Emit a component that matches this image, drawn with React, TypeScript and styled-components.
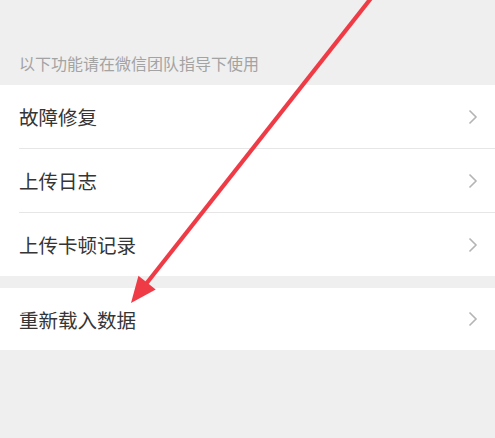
import React from "react";
import styled, { createGlobalStyle } from "styled-components";

const GlobalStyle = createGlobalStyle`
  html, body {
    margin: 0;
    padding: 0;
    background: #efefef;
  }
  body {
    font-family: "Noto Sans CJK SC", "Noto Sans", sans-serif;
  }
`;

const Page = styled.div`
  position: relative;
  width: 495px;
  height: 438px;
  background: #efefef;
  overflow: hidden;
`;

const Hint = styled.div`
  height: 85px;
  box-sizing: border-box;
  display: flex;
  align-items: flex-end;
  padding: 0 0 13px 19px;
  font-size: 16px;
  line-height: 18px;
  color: #a3a3a3;
`;

const Group = styled.div<{ gapTop?: boolean }>`
  background: #ffffff;
  margin-top: ${(p) => (p.gapTop ? "12px" : "0")};
`;

const Row = styled.div<{ h?: number }>`
  position: relative;
  height: ${(p) => p.h ?? 63}px;
  display: flex;
  align-items: center;
  justify-content: space-between;
  padding: 0 17px 0 19px;
  font-size: 19.5px;
  color: #353535;

  & + & {
    margin-top: 1px;
  }
  & + &::before {
    content: "";
    position: absolute;
    left: 19px;
    right: 0;
    top: -1px;
    height: 1px;
    background: #e6e6e6;
  }
`;

const Chevron = () => (
  <svg width="10" height="16" viewBox="0 0 10 16">
    <path d="M1.5 1.5 L8 8 L1.5 14.5" fill="none" stroke="#b4b4b4" strokeWidth="1.6" />
  </svg>
);

const Arrow = styled.svg`
  position: absolute;
  left: 0;
  top: 0;
  pointer-events: none;
`;

const items1 = ["故障修复", "上传日志", "上传卡顿记录"];

export default function App() {
  // arrow from top edge down to tip (131,303)
  const x1 = 372, y1 = -3, x2 = 131, y2 = 303;
  const dx = x2 - x1, dy = y2 - y1;
  const len = Math.hypot(dx, dy);
  const ux = dx / len, uy = dy / len;
  const headLen = 26, headW = 11;
  const bx = x2 - ux * headLen, by = y2 - uy * headLen;
  const px = -uy, py = ux;
  const head = `${x2},${y2} ${bx + px * headW},${by + py * headW} ${bx - px * headW},${by - py * headW}`;

  return (
    <>
      <GlobalStyle />
      <Page>
        <Hint>以下功能请在微信团队指导下使用</Hint>
        <Group>
          {items1.map((t) => (
            <Row key={t}>
              <span>{t}</span>
              <Chevron />
            </Row>
          ))}
        </Group>
        <Group gapTop>
          <Row h={62}>
            <span>重新载入数据</span>
            <Chevron />
          </Row>
        </Group>
        <Arrow width="495" height="438" viewBox="0 0 495 438">
          <line x1={x1} y1={y1} x2={bx + ux * 4} y2={by + uy * 4} stroke="#ef3b45" strokeWidth="4.2" />
          <polygon points={head} fill="#ef3b45" />
        </Arrow>
      </Page>
    </>
  );
}
